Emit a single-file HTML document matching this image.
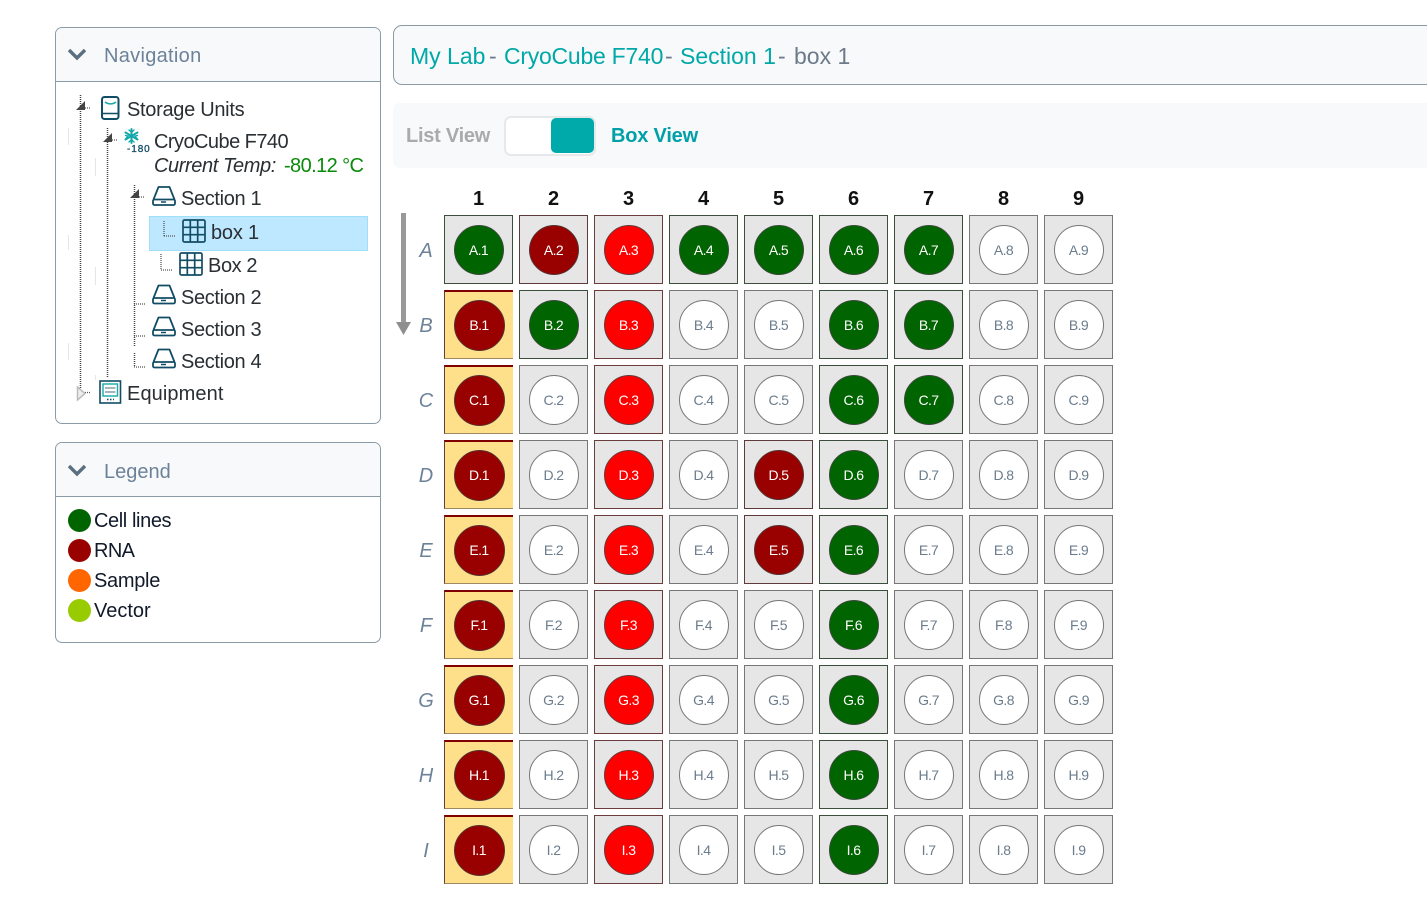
<!DOCTYPE html>
<html lang="en"><head><meta charset="utf-8"><title>box 1</title>
<style>
html,body{margin:0;padding:0;background:#fff;width:1427px;height:921px;overflow:hidden;font-family:"Liberation Sans","DejaVu Sans",sans-serif}
.a{position:absolute;white-space:nowrap;line-height:1}
.panel{position:absolute;left:55px;width:324px;border:1px solid #8a9ba6;border-radius:7px;background:#fff;overflow:hidden}
.head{background:#f8f9fb;border-bottom:1px solid #8a9ba6;height:53px}
.t{font-size:20px;color:#2a2f33}
.ti{font-size:23px;top:45px}
.grid{position:absolute;left:444px;top:215px;display:grid;grid-template-columns:repeat(9,69px);grid-auto-rows:69px;gap:6px}
.c{box-sizing:border-box;background:#e6e6e6;border:1px solid #777;display:flex;align-items:center;justify-content:center}
.c i{box-sizing:border-box;width:50px;height:50px;border-radius:50%;border:1px solid #777;background:#fff;color:#6b7c8c;font:normal 14px/48px "Liberation Sans",sans-serif;letter-spacing:-.6px;text-align:center;display:block}
.g{border-color:#3c4f3c}.g i{background:#006400;color:#fff;border-color:#3a4a3a}
.d{border-color:#5f3a3a}.d i{background:#990000;color:#fff;border-color:#553333}
.r{border-color:#6b3d3d}.r i{background:#ff0000;color:#fff;border-color:#663a3a}
.y{background:#ffe08a;border-top:2px solid #800000;border-right:0;border-left:1px solid #663c3c;border-bottom:1px solid #a08860}
.y i{width:51px;height:51px;line-height:49px}
.col{position:absolute;top:189px;width:69px;text-align:center;font-size:20px;font-weight:bold;color:#111;line-height:20px}
.row{position:absolute;left:406px;width:40px;text-align:center;font-size:20px;font-style:italic;color:#6c8299;line-height:20px}
</style></head><body>

<div class="panel" style="top:27px;height:395px"><div class="head"></div></div>
<div class="panel" style="top:442px;height:199px"><div class="head"></div></div>

<svg class="a" style="left:0;top:0" width="1427" height="921" viewBox="0 0 1427 921" fill="none">
<defs>
<symbol id="dr" viewBox="0 0 24 20" overflow="visible"><g fill="none" stroke="#124d66" stroke-width="1.800" stroke-linejoin="round"><path d="M1.500 13.500 6.500 1H17.500L22.500 13.500"/><rect x="1" y="13.500" width="22" height="5.500" rx="1.500"/></g><path d="M9 16H14" stroke="#124d66" stroke-width="1.500"/></symbol>
<symbol id="gr" viewBox="0 0 24 24" overflow="visible"><g fill="none" stroke="#124d66" stroke-width="1.700"><rect x="1" y="1" width="22" height="22" rx="1.500"/><path d="M8.300 1V23M15.700 1V23M1 8.300H23M1 15.700H23"/></g></symbol>
</defs>
<!-- chevrons -->
<path d="M69 50 77 58 85 50" stroke="#5a7080" stroke-width="3.400"/>
<path d="M69 466 77 474 85 466" stroke="#5a7080" stroke-width="3.400"/>
<!-- highlight -->
<rect x="149.500" y="216.500" width="218" height="34" fill="#bde8ff" stroke="#9fdffa"/>
<!-- faint lines -->
<g stroke="#e6e6e6"><path d="M68.500 128V145M68.500 235V250M68.500 343V360M95.500 158V176M95.500 267V285M95.500 375V380"/></g>
<!-- tree lines -->
<g stroke="#444" stroke-width="1.500" stroke-dasharray="1 1">
<path d="M80.500 95V388M107.500 128V378M134.500 185V347M134.500 353V367"/>
</g>
<g stroke="#555" stroke-width="1.300" stroke-dasharray="1 1">
<path d="M85 108H91M112 140H118M139 197H145M164 221V236M164 236H175M161 254V270M161 270H172M134 304H145M134 336H145M134 367H145M85 392.500H91"/>
</g>
<!-- expanders -->
<path d="M85 101V110H76Z" fill="#444"/>
<path d="M112 133V142H103Z" fill="#444"/>
<path d="M139 189V198H130Z" fill="#444"/>
<path d="M77.500 387V400L85 393.500Z" fill="#eee" stroke="#bbb" stroke-width="1.500"/>
<!-- storage units icon -->
<rect x="102" y="97" width="16.500" height="22" rx="2.500" stroke="#124d66" stroke-width="2"/>
<path d="M102 113.500H118.500" stroke="#124d66" stroke-width="1.500"/>
<path d="M105 102C108 104.500 113 104.500 116 102" stroke="#1aa8a8" stroke-width="1.500"/>
<!-- snowflake -->
<g stroke="#12a8a8" stroke-width="2" stroke-linecap="round">
<path d="M131.500 129V143M125.500 132.500 137.500 139.500M125.500 139.500 137.500 132.500"/>
<path d="M129 130 131.500 132.500 134 130M129 142 131.500 139.500 134 142M125.500 135.500 128 136 126 138.500M137.500 135.500 135 136 137 138.500" stroke-width="1.300"/>
</g>
<text x="127" y="152" font-family="Liberation Sans,sans-serif" font-size="10" fill="#124d66" stroke="#124d66" stroke-width=".3" letter-spacing=".9">-180</text>
<!-- drawers -->
<use href="#dr" x="152" y="186" width="24" height="20"/>
<use href="#dr" x="152" y="284.500" width="24" height="20"/>
<use href="#dr" x="152" y="316.500" width="24" height="20"/>
<use href="#dr" x="152" y="348.500" width="24" height="20"/>
<!-- grids -->
<use href="#gr" x="182" y="219" width="24" height="24"/>
<use href="#gr" x="179" y="252" width="24" height="24"/>
<!-- equipment -->
<rect x="100" y="381" width="20.500" height="22" stroke="#124d66" stroke-width="1.600"/>
<rect x="103" y="384" width="14.500" height="12" stroke="#1aa8a8" stroke-width="1.400"/>
<path d="M105 388H115.500M105 392H115.500" stroke="#8a9ba6" stroke-width="1.400"/>
<path d="M107 399.500H114" stroke="#124d66" stroke-width="1.400" stroke-dasharray="1.500 1.500"/>
<!-- legend dots -->
<circle cx="79.500" cy="520.500" r="11.500" fill="#006400"/>
<circle cx="79.500" cy="550.500" r="11.500" fill="#990000"/>
<circle cx="79.500" cy="580.500" r="11.500" fill="#ff6600"/>
<circle cx="79.500" cy="610.500" r="11.500" fill="#99cc00"/>
<!-- arrow -->
<rect x="401" y="213" width="5" height="110" fill="#999"/>
<path d="M396 322H411L403.500 335Z" fill="#8e8e8e"/>
</svg>

<div class="a" style="left:104px;top:46px;font-size:20px;color:#6c8299;letter-spacing:.3px">Navigation</div>
<div class="a" style="left:104px;top:462px;font-size:20px;color:#6c8299">Legend</div>

<div class="a t" style="left:127px;top:100px;letter-spacing:-.3px">Storage Units</div>
<div class="a t" style="left:154px;top:132px;letter-spacing:-.55px">CryoCube F740</div>
<div class="a t" style="left:154px;top:156px;font-style:italic;letter-spacing:-.4px">Current Temp:</div>
<div class="a t" style="left:284px;top:156px;color:#0a8a0a;letter-spacing:-.6px">-80.12 °C</div>
<div class="a t" style="left:181px;top:189px;letter-spacing:-.35px">Section 1</div>
<div class="a t" style="left:211px;top:223px;letter-spacing:-.2px">box 1</div>
<div class="a t" style="left:208px;top:256px;letter-spacing:-.4px">Box 2</div>
<div class="a t" style="left:181px;top:288px;letter-spacing:-.35px">Section 2</div>
<div class="a t" style="left:181px;top:320px;letter-spacing:-.35px">Section 3</div>
<div class="a t" style="left:181px;top:352px;letter-spacing:-.35px">Section 4</div>
<div class="a t" style="left:127px;top:384px;letter-spacing:.1px">Equipment</div>

<div class="a t" style="left:94px;top:511px;color:#111a2a;letter-spacing:-.4px">Cell lines</div>
<div class="a t" style="left:94px;top:541px;color:#111a2a;letter-spacing:-.6px">RNA</div>
<div class="a t" style="left:94px;top:571px;color:#111a2a;letter-spacing:-.3px">Sample</div>
<div class="a t" style="left:94px;top:601px;color:#111a2a">Vector</div>

<div class="a" style="left:393px;top:25px;width:1040px;height:58px;border:1px solid #8a9ba6;border-radius:9px;background:#f8f9fb"></div>
<div class="a ti" style="left:410px;color:#00a8a8">My Lab</div>
<div class="a ti" style="left:489px;color:#6c7a89">-</div>
<div class="a ti" style="left:504px;color:#00a8a8;letter-spacing:-.25px">CryoCube F740</div>
<div class="a ti" style="left:665px;color:#6c7a89">-</div>
<div class="a ti" style="left:680px;color:#00a8a8">Section 1</div>
<div class="a ti" style="left:778px;color:#6c7a89">-</div>
<div class="a ti" style="left:794px;color:#6c7a89">box 1</div>

<div class="a" style="left:393px;top:103px;width:1040px;height:65px;border-radius:7px;background:#f8f9fb"></div>
<div class="a" style="left:406px;top:126px;font-size:20px;font-weight:bold;color:#aaa;letter-spacing:-.25px">List View</div>
<div class="a" style="left:504px;top:116px;box-sizing:border-box;width:92px;height:40px;border:2px solid #e6e8ea;border-radius:7px;background:#fff"></div>
<div class="a" style="left:551px;top:118px;width:43px;height:35px;border-radius:5px;background:#00aaaa"></div>
<div class="a" style="left:611px;top:126px;font-size:20px;font-weight:bold;color:#00a0a8;letter-spacing:-.2px">Box View</div>

<div class="col" style="left:444px">1</div><div class="col" style="left:519px">2</div><div class="col" style="left:594px">3</div><div class="col" style="left:669px">4</div><div class="col" style="left:744px">5</div><div class="col" style="left:819px">6</div><div class="col" style="left:894px">7</div><div class="col" style="left:969px">8</div><div class="col" style="left:1044px">9</div>

<div class="row" style="top:241px">A</div><div class="row" style="top:316px">B</div><div class="row" style="top:391px">C</div><div class="row" style="top:466px">D</div><div class="row" style="top:541px">E</div><div class="row" style="top:616px">F</div><div class="row" style="top:691px">G</div><div class="row" style="top:766px">H</div><div class="row" style="top:841px">I</div>

<div class="grid">
<div class="c g"><i>A.1</i></div><div class="c d"><i>A.2</i></div><div class="c r"><i>A.3</i></div><div class="c g"><i>A.4</i></div><div class="c g"><i>A.5</i></div><div class="c g"><i>A.6</i></div><div class="c g"><i>A.7</i></div><div class="c"><i>A.8</i></div><div class="c"><i>A.9</i></div>
<div class="c d y"><i>B.1</i></div><div class="c g"><i>B.2</i></div><div class="c r"><i>B.3</i></div><div class="c"><i>B.4</i></div><div class="c"><i>B.5</i></div><div class="c g"><i>B.6</i></div><div class="c g"><i>B.7</i></div><div class="c"><i>B.8</i></div><div class="c"><i>B.9</i></div>
<div class="c d y"><i>C.1</i></div><div class="c"><i>C.2</i></div><div class="c r"><i>C.3</i></div><div class="c"><i>C.4</i></div><div class="c"><i>C.5</i></div><div class="c g"><i>C.6</i></div><div class="c g"><i>C.7</i></div><div class="c"><i>C.8</i></div><div class="c"><i>C.9</i></div>
<div class="c d y"><i>D.1</i></div><div class="c"><i>D.2</i></div><div class="c r"><i>D.3</i></div><div class="c"><i>D.4</i></div><div class="c d"><i>D.5</i></div><div class="c g"><i>D.6</i></div><div class="c"><i>D.7</i></div><div class="c"><i>D.8</i></div><div class="c"><i>D.9</i></div>
<div class="c d y"><i>E.1</i></div><div class="c"><i>E.2</i></div><div class="c r"><i>E.3</i></div><div class="c"><i>E.4</i></div><div class="c d"><i>E.5</i></div><div class="c g"><i>E.6</i></div><div class="c"><i>E.7</i></div><div class="c"><i>E.8</i></div><div class="c"><i>E.9</i></div>
<div class="c d y"><i>F.1</i></div><div class="c"><i>F.2</i></div><div class="c r"><i>F.3</i></div><div class="c"><i>F.4</i></div><div class="c"><i>F.5</i></div><div class="c g"><i>F.6</i></div><div class="c"><i>F.7</i></div><div class="c"><i>F.8</i></div><div class="c"><i>F.9</i></div>
<div class="c d y"><i>G.1</i></div><div class="c"><i>G.2</i></div><div class="c r"><i>G.3</i></div><div class="c"><i>G.4</i></div><div class="c"><i>G.5</i></div><div class="c g"><i>G.6</i></div><div class="c"><i>G.7</i></div><div class="c"><i>G.8</i></div><div class="c"><i>G.9</i></div>
<div class="c d y"><i>H.1</i></div><div class="c"><i>H.2</i></div><div class="c r"><i>H.3</i></div><div class="c"><i>H.4</i></div><div class="c"><i>H.5</i></div><div class="c g"><i>H.6</i></div><div class="c"><i>H.7</i></div><div class="c"><i>H.8</i></div><div class="c"><i>H.9</i></div>
<div class="c d y"><i>I.1</i></div><div class="c"><i>I.2</i></div><div class="c r"><i>I.3</i></div><div class="c"><i>I.4</i></div><div class="c"><i>I.5</i></div><div class="c g"><i>I.6</i></div><div class="c"><i>I.7</i></div><div class="c"><i>I.8</i></div><div class="c"><i>I.9</i></div>
</div>
</body></html>
